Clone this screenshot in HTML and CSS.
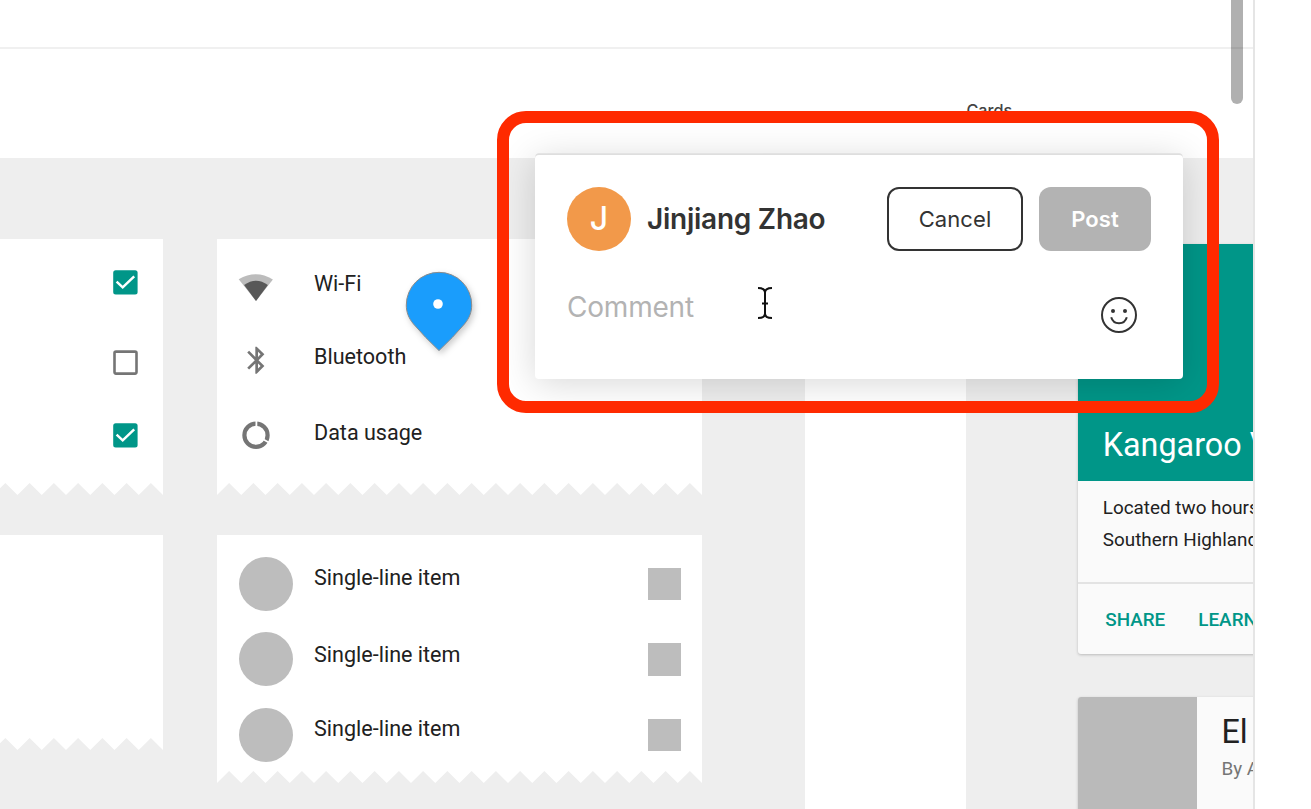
FILE: index.html
```html
<!DOCTYPE html>
<html lang="en">
<head>
<meta charset="utf-8">
<title>Prototype comments</title>
<link rel="stylesheet" href="styles.css">
</head>
<body>
<svg class="defs" width="0" height="0" aria-hidden="true">
  <symbol id="torn" viewBox="0 0 485 12">
    <path d="M0 0V12L12.1 0L24.25 12L36.4 0L48.5 12L60.6 0L72.75 12L84.9 0L97 12L109.1 0L121.25 12L133.4 0L145.5 12L157.6 0L169.75 12L181.9 0L194 12L206.1 0L218.25 12L230.4 0L242.5 12L254.6 0L266.75 12L278.9 0L291 12L303.1 0L315.25 12L327.4 0L339.5 12L351.6 0L363.75 12L375.9 0L388 12L400.1 0L412.25 12L424.4 0L436.5 12L448.6 0L460.75 12L472.9 0L485 12V0Z" fill="#fff"/>
  </symbol>
  <symbol id="checked" viewBox="0 0 25 25">
    <rect x=".2" y=".2" width="24.4" height="24.4" rx="2.5" fill="#009688"/>
    <path d="M3.6 11.7L9.7 17.3L21.2 6.3" fill="none" stroke="#fff" stroke-width="2.5"/>
  </symbol>
</svg>
<div class="app">
  <main class="canvas">
    <div class="toolbar"></div>
    <div class="titles"><span class="title">Cards</span></div>
    <div class="boards">
      <section class="board lists">
        <div class="column first">
          <div class="sheet">
            <div class="checks">
              <svg class="check"><use href="#checked"/></svg>
              <svg class="check" viewBox="0 0 25 25"><rect x="1.5" y="1.6" width="22" height="22" rx="1.5" fill="none" stroke="#757575" stroke-width="2.6"/></svg>
              <svg class="check"><use href="#checked"/></svg>
            </div>
            <svg class="torn"><use href="#torn"/></svg>
          </div>
          <div class="sheet blank"><svg class="torn"><use href="#torn"/></svg></div>
        </div>
        <div class="column second">
          <div class="sheet">
            <div class="rows settings">
              <div class="row"><svg class="icon" viewBox="0 0 36 36"><path d="M.7 12.2Q18 2 34.9 12.4L18 33.9Z" fill="#bcbcbc"/><path d="M6.1 18Q18 9.4 29.9 18L18 33.9Z" fill="#585858"/></svg><span class="label wifi">Wi-Fi</span></div>
              <div class="row"><svg class="icon" viewBox="-1.83 -1.43 26.66 26.66"><path fill="#757575" d="M17.71 7.71L12 2h-1v7.59L6.41 5 5 6.41 10.59 12 5 17.59 6.41 19 11 14.41V22h1l5.71-5.71-4.3-4.29 4.3-4.29zM13 5.83l1.88 1.88L13 9.59V5.83zm1.88 10.46L13 18.17v-3.76l1.88 1.88z"/></svg><span class="label low">Bluetooth</span></div>
              <div class="row"><svg class="icon" viewBox="0 0 36 36"><circle cx="18" cy="18.2" r="11.6" fill="none" stroke="#757575" stroke-width="4.2"/><path d="M18.4 10V3M25.5 22.5L33 26.8" stroke="#fff" stroke-width="1.8"/></svg><span class="label low">Data usage</span></div>
            </div>
            <svg class="torn"><use href="#torn"/></svg>
          </div>
          <div class="sheet">
            <div class="rows people">
              <div class="row"><i class="dot"></i><span class="label a">Single-line item</span><i class="box"></i></div>
              <div class="row"><i class="dot"></i><span class="label b">Single-line item</span><i class="box"></i></div>
              <div class="row"><i class="dot"></i><span class="label a">Single-line item</span><i class="box"></i></div>
            </div>
            <svg class="torn"><use href="#torn"/></svg>
          </div>
        </div>
      </section>
      <section class="board cards">
        <article class="card">
          <header class="hero">Kangaroo V</header>
          <div class="copy">Located two hours<br>Southern Highland</div>
          <footer class="actions"><span>SHARE</span><span>LEARN</span></footer>
        </article>
        <article class="card media">
          <div class="cover"></div>
          <div class="info"><div class="name">El</div><div class="by">By A</div></div>
        </article>
      </section>
    </div>
  </main>
  <aside class="side"></aside>
</div>

<div class="scrollbar"></div>

<svg class="pin" viewBox="0 0 90 100">
  <path d="M45 88.6Q31 75.5 19.5 62C14.5 56 12.3 50 12.3 43A32.7 32.7 0 0 1 77.7 43C77.7 50 75.5 56 70.5 62Q59 75.5 45 88.6Z" fill="#1a9dfc" stroke="#8b8b8b" stroke-width="1"/>
  <circle cx="44" cy="42" r="4.8" fill="#fff"/>
</svg>

<div class="composer">
  <div class="head">
    <div class="avatar">J</div>
    <div class="author">Jinjiang Zhao</div>
    <button class="btn cancel">Cancel</button>
    <button class="btn post">Post</button>
  </div>
  <div class="entry">
    <span class="placeholder">Comment</span>
    <svg class="smile" viewBox="0 0 38 38" fill="none" stroke="#333" stroke-width="2">
      <circle cx="19" cy="19" r="17"/>
      <path d="M11.2 21.2C13.5 29.2 24.5 29.2 26.8 21.2"/>
      <circle cx="13" cy="15" r="2" fill="#333" stroke="none"/><circle cx="25" cy="15" r="2" fill="#333" stroke="none"/>
    </svg>
  </div>
</div>
<svg class="caret" viewBox="0 0 16 34" fill="none" stroke="#111" stroke-width="2">
  <path d="M1 2C5 2 8 2.5 8 6.5C8 2.5 11 2 15 2M8 6V28M1 32C5 32 8 31.5 8 27.5C8 31.5 11 32 15 32M5 17.5H11"/>
</svg>
<div class="highlight"></div>
</body>
</html>
```
FILE: styles.css
```css
* { box-sizing: border-box; }
body { margin: 0; background: #fff; font-family: Roboto, "Liberation Sans", sans-serif; color: #212121; }
svg { display: block; }
.defs { position: absolute; }
.app { display: flex; width: 1311px; height: 809px; overflow: hidden; }
.canvas { width: 1255px; flex: none; border-right: 2px solid #e5e5e5; overflow: hidden; }
.side { flex: 1; }
.toolbar { height: 49px; border-bottom: 2px solid #f0f0f0; }
.titles { height: 109px; padding: 50px 0 0 966.5px; }
.title { display: block; font: 500 16.2px/22px Inter, sans-serif; color: #444; }

.boards { display: flex; gap: 161.8px; height: 651px; }
.board { background: #eee; flex: none; }
.lists { width: 804.7px; display: flex; gap: 54px; padding-top: 80.7px; }
.cards { width: 287px; padding: 86.3px 0 0 111.8px; }
.column { display: flex; flex-direction: column; gap: 40.3px; }
.first { width: 163px; }
.second { width: 485px; }
.sheet { display: flex; flex-direction: column; align-items: flex-end; overflow: hidden; }
.torn { width: 485px; height: 12px; flex: none; }
.checks { width: 100%; height: 244.3px; background: #fff; padding: 31px 25.3px 0 0; display: flex; flex-direction: column; align-items: flex-end; }
.check { width: 25px; height: 25px; flex: none; margin-bottom: 55.5px; }
.check + .check { margin-bottom: 48.2px; }
.check:last-child { margin-bottom: 0; }
.blank { border-top: 203.7px solid #fff; }
.rows { width: 100%; background: #fff; }
.settings { height: 244.3px; padding: 8.2px 21px 0; }
.people { height: 236px; padding: 11px 21.5px 0; }
.row { height: 75.4px; display: flex; align-items: center; }
.icon { width: 36px; height: 36px; flex: none; }
.label { font-size: 21.56px; line-height: 26px; }
.settings .label { margin-left: 40px; }
.wifi { padding-bottom: 2px; }
.low { padding-bottom: 5px; }
.dot { width: 54px; height: 54px; border-radius: 50%; background: #bdbdbd; }
.box { width: 32.5px; height: 32.5px; background: #bdbdbd; }
.people .label { margin-left: 21.5px; flex: 1; }
.a { padding-bottom: 11px; }
.b { padding-bottom: 8px; }

.card { width: 463px; background: #fafafa; border-radius: 3px; box-shadow: 0 1px 3px rgba(0,0,0,.22); overflow: hidden; }
.hero { height: 237px; background: #009688; color: #fff; font-size: 32.3px; line-height: 38px; padding: 182px 0 0 24.5px; }
.copy { height: 101px; padding: 10.6px 0 0 24.5px; font-size: 18.86px; line-height: 32px; }
.actions { display: flex; gap: 33px; height: 72px; border-top: 2px solid #e3e3e3; padding: 23.4px 0 0 27px; font-size: 18.86px; line-height: 24px; font-weight: 500; color: #009688; }
.media { display: flex; margin-top: 42.7px; height: 130px; }
.cover { width: 118.7px; background: #bababa; }
.info { padding: 16px 0 0 24.5px; }
.name { font-size: 32.3px; line-height: 38px; }
.by { font-size: 18.86px; line-height: 24px; margin-top: 6px; color: #757575; }

.scrollbar { position: absolute; left: 1231px; top: -20px; width: 12px; height: 123.5px; border-radius: 6px; background: rgba(0,0,0,.31); }
.pin { position: absolute; left: 394px; top: 262px; width: 90px; height: 100px; filter: drop-shadow(2px 3px 3px rgba(0,0,0,.2)); }
.composer { position: absolute; left: 535px; top: 155px; width: 648px; height: 224px; padding: 32px; background: #fff; border-radius: 4px; box-shadow: 0 -2px 0 -.3px #dedede, 0 4px 36px rgba(0,0,0,.16); font-family: Inter, sans-serif; color: #333; }
.head { display: flex; align-items: center; height: 64px; }
.avatar { width: 64px; height: 64px; border-radius: 50%; background: #f2994a; color: #fff; font-size: 32px; line-height: 64px; font-weight: 500; text-align: center; }
.author { margin-left: 16px; flex: 1; font-size: 28px; line-height: 36px; font-weight: 600; letter-spacing: -.25px; white-space: nowrap; }
.btn { height: 64px; padding: 0; border-radius: 12px; font-family: Inter, sans-serif; font-size: 22px; letter-spacing: .1px; }
.cancel { width: 136px; border: 2px solid #333; background: #fff; color: #333; }
.post { width: 112px; margin-left: 16px; border: 0; background: #b3b3b3; color: #fff; font-weight: 600; }
.entry { display: flex; justify-content: space-between; padding: 38px 13px 0 0; }
.placeholder { font-size: 28px; line-height: 36px; color: #b3b3b3; letter-spacing: -.2px; }
.smile { width: 38px; height: 38px; margin-top: 7px; }
.caret { position: absolute; left: 757px; top: 286px; width: 16px; height: 34px; }
.highlight { position: absolute; left: 497.4px; top: 111px; width: 722px; height: 302px; border: 12px solid #ff2a00; border-radius: 29px; }
```
